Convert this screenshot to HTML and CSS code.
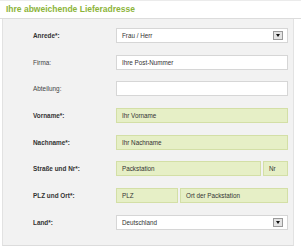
FILE: index.html
```html
<!DOCTYPE html>
<html lang="de">
<head>
  <meta charset="UTF-8">
  <meta name="viewport" content="width=device-width, initial-scale=1.0">
  <title>Lieferadresse</title>
  <link rel="stylesheet" href="styles.css">
</head>
<body>
  <div class="address-box">
    <div class="box-head">
      <h2>Ihre abweichende Lieferadresse</h2>
    </div>
    <form class="box-body">
      <label class="req">Anrede*:</label>
      <div class="field select">
        <span>Frau / Herr</span>
        <span class="arrow"></span>
      </div>

      <label>Firma:</label>
      <div class="field">Ihre Post-Nummer</div>

      <label>Abteilung:</label>
      <div class="field"></div>

      <label class="req">Vorname*:</label>
      <div class="field hint">Ihr Vorname</div>

      <label class="req">Nachname*:</label>
      <div class="field hint">Ihr Nachname</div>

      <label class="req">Straße und Nr*:</label>
      <div class="split street">
        <div class="field hint">Packstation</div>
        <div class="field hint">Nr</div>
      </div>

      <label class="req">PLZ und Ort*:</label>
      <div class="split city">
        <div class="field hint">PLZ</div>
        <div class="field hint">Ort der Packstation</div>
      </div>

      <label class="req">Land*:</label>
      <div class="field select">
        <span>Deutschland</span>
        <span class="arrow"></span>
      </div>
    </form>
  </div>
</body>
</html>
```

FILE: styles.css
```css
body {
  margin: 0;
  font-family: "Liberation Sans", Arial, sans-serif;
  background: #ffffff;
  color: #333;
}

.address-box {
  width: 301px;
}

.box-head {
  height: 17px;
  border-top: 1px solid #ebebeb;
  border-bottom: 1px solid #dcdcdc;
  padding-left: 6px;
}

.box-head h2 {
  margin: 0;
  font-size: 8.5px;
  line-height: 17px;
  font-weight: bold;
  color: #8cb43a;
}

.box-body {
  margin: 0 7px 0 2px;
  background: #f2f2f2;
  border-left: 1px solid #e2e2e2;
  border-right: 1px solid #e2e2e2;
  border-bottom: 1px solid #dcdcdc;
  padding: 9px 0 15px 30px;
  display: grid;
  grid-template-columns: 83px 172px;
  grid-auto-rows: 15px;
  row-gap: 11.7px;
  align-items: center;
}

.box-body label {
  font-size: 6.4px;
  color: #444;
}

.box-body label.req {
  font-weight: bold;
  color: #333;
}

.field {
  height: 15px;
  box-sizing: border-box;
  background: #fff;
  border: 1px solid #d6d6d6;
  font-size: 6.3px;
  line-height: 13px;
  padding-left: 5px;
  color: #333;
}

.field.hint {
  background: #e6efc6;
  border-color: #d3dfa6;
}

.select {
  display: flex;
  align-items: center;
  justify-content: space-between;
  padding-right: 4px;
}

.arrow {
  width: 10px;
  height: 9px;
  box-sizing: border-box;
  background: #e4e4e4;
  border: 1px solid #9a9a9a;
  display: flex;
  align-items: center;
  justify-content: center;
}

.arrow::after {
  content: "";
  border-left: 2.5px solid transparent;
  border-right: 2.5px solid transparent;
  border-top: 3px solid #111;
}

.split {
  display: flex;
  gap: 2px;
}

.street .field:first-child {
  width: 145px;
}

.street .field:last-child {
  flex: 1;
}

.city .field:first-child {
  width: 62px;
}

.city .field:last-child {
  flex: 1;
}
```
